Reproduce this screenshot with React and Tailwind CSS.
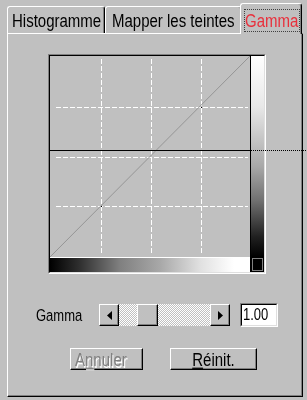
export default function App() {
  const raised =
    "border border-t-white border-l-white border-r-black border-b-black shadow-[inset_-1px_-1px_0_#808080] bg-[#c0c0c0]";
  const tall = "inline-block scale-y-125";
  return (
    <div className="w-[307px] h-[400px] bg-[#c0c0c0] overflow-hidden font-['Liberation_Sans',Arial,sans-serif] text-black relative">
      {/* tabs */}
      <div className="flex items-end pl-[7px] h-[33px] text-[15px] leading-[17px]">
        <div className="w-[98px] h-[27px] border-l border-t border-r border-l-white border-t-white border-r-black rounded-t-[3px] shadow-[inset_-1px_0_0_#808080] pl-[4px] flex items-center">
          <span className={tall}>Histogramme</span>
        </div>
        <div className="w-[137px] h-[27px] border-l border-t border-r border-l-white border-t-white border-r-black rounded-t-[3px] shadow-[inset_-1px_0_0_#808080] pl-[6px] flex items-center">
          <span className={tall}>Mapper les teintes</span>
        </div>
        <div className="relative z-10 -ml-[2px] -mb-[1px] w-[62px] h-[31px] bg-[#c0c0c0] border-l border-t border-r border-l-white border-t-white border-r-black rounded-t-[3px] shadow-[inset_-1px_0_0_#808080] pl-[3px] pt-[2px] flex items-center">
          <span className="border border-dotted border-[#404040] py-[2px] w-[56px] text-[#e8303c]">
            <span className={tall}>Gamma</span>
          </span>
        </div>
      </div>

      {/* panel */}
      <div className="ml-[7px] w-[296px] h-[364px] border border-l-white border-t-white border-r-black border-b-black shadow-[inset_-1px_-1px_0_#808080] flex flex-col">
        {/* graph */}
        <div className="mt-[20px] ml-[40px] w-[218px] h-[220px] border border-t-[#808080] border-l-[#808080] border-r-white border-b-white">
          <div className="w-full h-full border border-t-black border-l-black border-r-[#dfdfdf] border-b-[#dfdfdf] grid grid-cols-[200px_14px] grid-rows-[201px_15px]">
            <div className="relative">
              <svg width="200" height="201" className="block">
                <g stroke="#ffffff" strokeWidth="1" strokeDasharray="5 2">
                  <line x1="51.5" y1="3" x2="51.5" y2="198" />
                  <line x1="101.5" y1="3" x2="101.5" y2="198" />
                  <line x1="151.5" y1="3" x2="151.5" y2="198" />
                  <line x1="6" y1="51.5" x2="198" y2="51.5" />
                  <line x1="6" y1="101.5" x2="198" y2="101.5" />
                  <line x1="6" y1="150.5" x2="198" y2="150.5" />
                </g>
                <line x1="0" y1="201" x2="200" y2="0" stroke="#959595" strokeWidth="1" />
                <line x1="0" y1="94.5" x2="200" y2="94.5" stroke="#000" strokeWidth="1" />
                <rect x="51" y="150" width="1" height="1" fill="#000" />
                <rect x="151" y="51" width="1" height="1" fill="#000" />
              </svg>
              <div className="absolute left-[200px] top-[94px] w-[60px] h-0 border-t border-dotted border-black"></div>
            </div>
            <div className="border-l border-black bg-[linear-gradient(to_bottom,#ffffff_0%,#e8e8e8_25%,#a8a8a8_55%,#707070_72%,#202020_90%,#000000_100%)]"></div>
            <div className="border-t border-white bg-[linear-gradient(to_right,#000000_0%,#303030_15%,#808080_35%,#a8a8a8_55%,#e0e0e0_75%,#ffffff_92%)]"></div>
            <div className="bg-black flex items-start justify-end pt-[1px] pr-[1px]">
              <div className="w-[11px] h-[13px] border border-[#808080] bg-black"></div>
            </div>
          </div>
        </div>

        {/* gamma row */}
        <div className="mt-[29px] h-[24px] flex items-center pl-[28px]">
          <div className="w-[63px] text-[13px] leading-[15px]">
            <span className={tall}>Gamma</span>
          </div>
          <div className="flex w-[131px] h-[22px]">
            <div className={`w-[20px] h-full flex items-center justify-center ${raised}`}>
              <svg width="5" height="9" className="block">
                <polygon points="5,0 0,4.5 5,9" fill="#000" />
              </svg>
            </div>
            <div className="flex-1 h-full bg-[repeating-conic-gradient(#ffffff_0_25%,#c0c0c0_0_50%)] bg-[length:2px_2px]">
              <div className={`ml-[18px] w-[21px] h-full ${raised}`}></div>
            </div>
            <div className={`w-[20px] h-full flex items-center justify-center ${raised}`}>
              <svg width="5" height="9" className="block">
                <polygon points="0,0 5,4.5 0,9" fill="#000" />
              </svg>
            </div>
          </div>
          <div className="ml-[10px] w-[38px] h-[24px] border border-t-[#808080] border-l-[#808080] border-r-white border-b-white">
            <div className="w-full h-full border border-t-black border-l-black border-r-[#dfdfdf] border-b-[#dfdfdf] bg-white text-[13px] leading-[20px] pl-[1px]">
              <span className={tall}>1.00</span>
            </div>
          </div>
        </div>

        {/* buttons */}
        <div className="mt-[21px] flex pl-[62px] gap-[27px] text-[15px] leading-[17px]">
          <div className={`w-[73px] h-[22px] flex items-center justify-start pl-[4px] text-[#808080] [text-shadow:1px_1px_0_#ffffff] ${raised}`}>
            <span className={tall}>
              A<span className="underline">n</span>nuler
            </span>
          </div>
          <div className={`w-[87px] h-[22px] flex items-center justify-center ${raised}`}>
            <span className={tall}>
              <span className="underline">R</span>éinit.
            </span>
          </div>
        </div>
      </div>
    </div>
  );
}
